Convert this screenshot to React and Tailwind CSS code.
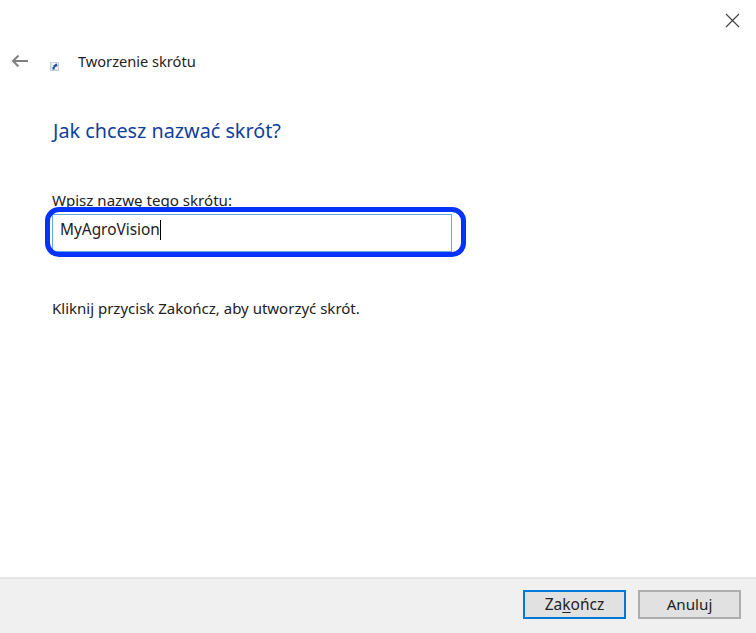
const font = { fontFamily: '"Noto Sans", "Open Sans", sans-serif' }

function ShortcutIcon() {
  return (
    <svg width="9" height="9" viewBox="0 0 9 9" className="shrink-0">
      <rect x="0" y="0" width="9" height="9" fill="#c9d0dc" />
      <rect x="1.5" y="1" width="6.5" height="6.5" fill="#f4f6fa" />
      <path d="M2.5 7.5V5.2L4 4H2.8L6.5 1.2 7.8 4.5H6.2L4.8 5.4 4.6 7.5z" fill="#1d52a8" />
    </svg>
  )
}

export default function App() {
  return (
    <div style={font} className="w-[756px] h-[633px] bg-white flex flex-col text-[#1a1a1a] overflow-hidden">
      <div className="flex justify-end h-[42px] pt-[13px] pr-[16px]">
        <svg width="15" height="15" viewBox="0 0 15 15" stroke="#444" strokeWidth="1.2" fill="none">
          <path d="M1 1l13 13M14 1L1 14" />
        </svg>
      </div>

      <div className="flex items-center h-[38px] pl-[11px]">
        <svg width="18" height="14" viewBox="0 0 18 14" stroke="#808080" strokeWidth="2" fill="none">
          <path d="M17 7H2M7.5 1.5L2 7l5.5 5.5" />
        </svg>
        <div className="ml-[21px] mt-[11px]">
          <ShortcutIcon />
        </div>
        <span className="ml-[19px] text-[14.6px] leading-none text-[#222]">Tworzenie skrótu</span>
      </div>

      <div className="flex-1 pl-[52px] flex flex-col">
        <h1 className="mt-[38px] ml-px text-[19.8px] leading-[26px] text-[#0f3f9e]">Jak chcesz nazwać skrót?</h1>

        <label className="mt-[47px] text-[15.1px] leading-[18px] text-[#222]">
          Wpisz <span className="underline underline-offset-2">n</span>azwę tego skrótu:
        </label>

        <div className="relative mt-[5px] w-[400px] h-[38px] border border-[#64a8e0] flex items-center pl-[7px] pb-[7px] text-[15.4px] text-[#222]">
          MyAgroVision
          <span className="w-px h-[20px] bg-black"></span>
          <div className="absolute left-[-8px] top-[-8px] w-[421px] h-[50px] border-[5px] border-[#0433ff] rounded-[14px]"></div>
        </div>

        <p className="mt-[46px] text-[15px] leading-[20px] text-[#222]">Kliknij przycisk Zakończ, aby utworzyć skrót.</p>
      </div>

      <div className="h-[56px] bg-[#f0f0f0] border-t-2 border-[#e5e5e5] flex items-start justify-end gap-[12px] pt-[11px] pr-[15px]">
        <button className="w-[103px] h-[29px] bg-[#e1e1e1] border-2 border-[#0078d7] text-[15.5px] text-[#222] flex items-center justify-center">
          <span>Za<span className="underline underline-offset-2">k</span>ończ</span>
        </button>
        <button className="w-[103px] h-[29px] bg-[#e1e1e1] border-2 border-[#adadad] text-[15.2px] text-[#222] flex items-center justify-center">
          Anuluj
        </button>
      </div>
    </div>
  )
}
